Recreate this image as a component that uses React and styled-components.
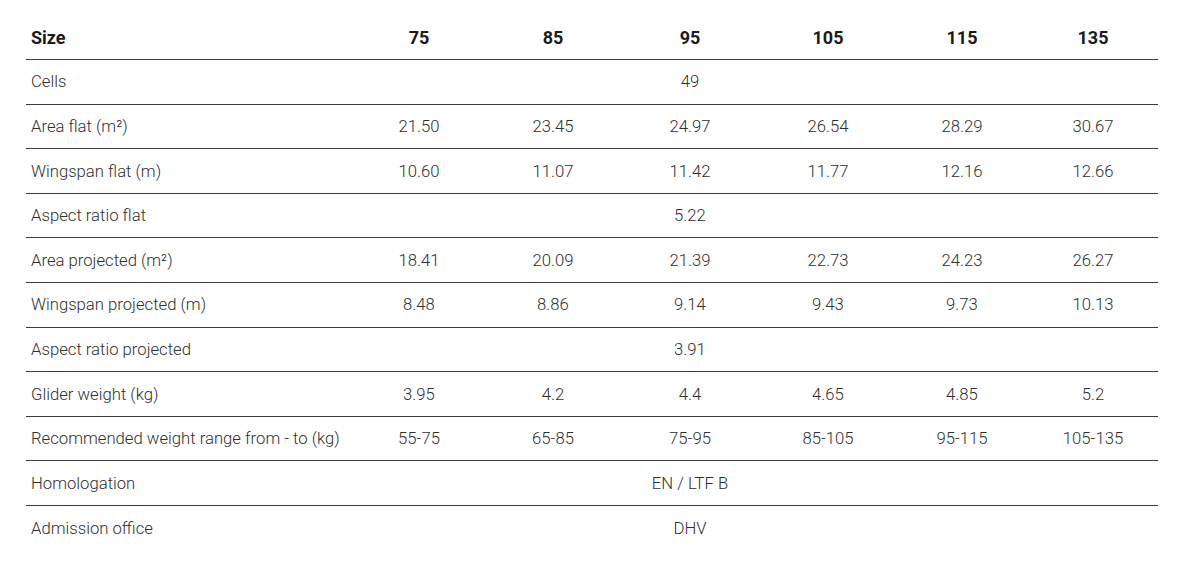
import React from "react";
import styled, { createGlobalStyle } from "styled-components";

const GlobalStyle = createGlobalStyle`
  body {
    margin: 0;
    background: #ffffff;
    font-family: Roboto, "Liberation Sans", sans-serif;
  }
`;

const sizes = ["75", "85", "95", "105", "115", "135"];
const colWidths = [326, 134, 134, 140, 136, 132, 130];

const rows = [
  { label: "Cells", span: "49" },
  { label: "Area flat (m²)", values: ["21.50", "23.45", "24.97", "26.54", "28.29", "30.67"] },
  { label: "Wingspan flat (m)", values: ["10.60", "11.07", "11.42", "11.77", "12.16", "12.66"] },
  { label: "Aspect ratio flat", span: "5.22" },
  { label: "Area projected (m²)", values: ["18.41", "20.09", "21.39", "22.73", "24.23", "26.27"] },
  { label: "Wingspan projected (m)", values: ["8.48", "8.86", "9.14", "9.43", "9.73", "10.13"] },
  { label: "Aspect ratio projected", span: "3.91" },
  { label: "Glider weight (kg)", values: ["3.95", "4.2", "4.4", "4.65", "4.85", "5.2"] },
  {
    label: "Recommended weight range from - to (kg)",
    values: ["55-75", "65-85", "75-95", "85-105", "95-115", "105-135"],
  },
  { label: "Homologation", span: "EN / LTF B" },
  { label: "Admission office", span: "DHV" },
];

const Wrap = styled.div`
  padding: 15px 36px 0 26px;
`;

const Table = styled.table`
  width: 1132px;
  border-collapse: collapse;
  table-layout: fixed;
  color: #2f2f2f;
  font-size: 16.7px;
  font-weight: 300;
`;

const Row = styled.tr`
  height: 44.6px;
  border-bottom: ${(p) => (p.$last ? "none" : "1px solid #3c3c3c")};
`;

const HeadCell = styled.th`
  padding: 0;
  font-weight: 700;
  font-size: 18px;
  color: #1b1b1b;
  text-align: ${(p) => (p.$label ? "left" : "center")};
  padding-left: ${(p) => (p.$label ? "5px" : "0")};
`;

const LabelCell = styled.td`
  padding: 0 0 0 5px;
  text-align: left;
  white-space: nowrap;
`;

const ValueCell = styled.td`
  padding: 0;
  text-align: center;
  white-space: nowrap;
  overflow: visible;
`;

export default function App() {
  return (
    <>
      <GlobalStyle />
      <Wrap>
        <Table>
          <colgroup>
            {colWidths.map((w, i) => (
              <col key={i} style={{ width: w }} />
            ))}
          </colgroup>
          <thead>
            <Row>
              <HeadCell $label>Size</HeadCell>
              {sizes.map((s) => (
                <HeadCell key={s}>{s}</HeadCell>
              ))}
            </Row>
          </thead>
          <tbody>
            {rows.map((r, i) => (
              <Row key={r.label} $last={i === rows.length - 1}>
                <LabelCell>{r.label}</LabelCell>
                {r.values
                  ? r.values.map((v, j) => <ValueCell key={j}>{v}</ValueCell>)
                  : sizes.map((s, j) => (
                      <ValueCell key={s}>{j === 2 ? r.span : ""}</ValueCell>
                    ))}
              </Row>
            ))}
          </tbody>
        </Table>
      </Wrap>
    </>
  );
}
